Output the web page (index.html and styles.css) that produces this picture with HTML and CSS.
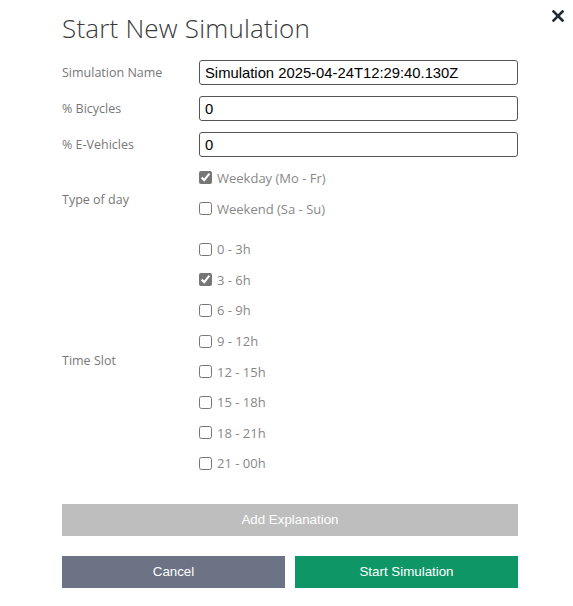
FILE: index.html
```html
<!DOCTYPE html>
<html lang="en">
<head>
  <meta charset="UTF-8">
  <meta name="viewport" content="width=device-width, initial-scale=1.0">
  <title>Start New Simulation</title>
  <link rel="stylesheet" href="styles.css">
</head>
<body>
  <div class="modal">
    <button class="close-btn" aria-label="Close">
      <svg width="12" height="12" viewBox="0 0 12 12"><path d="M1.5 1.5 L10.5 10.5 M10.5 1.5 L1.5 10.5" stroke="#222a33" stroke-width="2.6" stroke-linecap="square"/></svg>
    </button>
    <h1 class="modal__title">Start New Simulation</h1>

    <form class="sim-form">
      <label class="sim-form__label" for="simName">Simulation Name</label>
      <input class="sim-form__input" id="simName" type="text" value="Simulation 2025-04-24T12:29:40.130Z">

      <label class="sim-form__label" for="bicycles">% Bicycles</label>
      <input class="sim-form__input" id="bicycles" type="text" value="0">

      <label class="sim-form__label" for="evehicles">% E-Vehicles</label>
      <input class="sim-form__input" id="evehicles" type="text" value="0">

      <span class="sim-form__label sim-form__label--group">Type of day</span>
      <div class="options options--day">
        <label class="option"><input type="checkbox" checked> Weekday (Mo - Fr)</label>
        <label class="option"><input type="checkbox"> Weekend (Sa - Su)</label>
      </div>

      <span class="sim-form__label sim-form__label--group">Time Slot</span>
      <div class="options options--time">
        <label class="option"><input type="checkbox"> 0 - 3h</label>
        <label class="option"><input type="checkbox" checked> 3 - 6h</label>
        <label class="option"><input type="checkbox"> 6 - 9h</label>
        <label class="option"><input type="checkbox"> 9 - 12h</label>
        <label class="option"><input type="checkbox"> 12 - 15h</label>
        <label class="option"><input type="checkbox"> 15 - 18h</label>
        <label class="option"><input type="checkbox"> 18 - 21h</label>
        <label class="option"><input type="checkbox"> 21 - 00h</label>
      </div>
    </form>

    <button class="btn btn--muted">Add Explanation</button>
    <div class="actions">
      <button class="btn btn--cancel">Cancel</button>
      <button class="btn btn--start">Start Simulation</button>
    </div>
  </div>
</body>
</html>
```

FILE: styles.css
```css
body {
  margin: 0;
  padding: 0;
  background: #fff;
  font-family: "Open Sans", "Noto Sans", sans-serif;
}

.modal {
  position: relative;
  width: 456px;
  padding: 10px 55px 18px 62px;
}

.close-btn {
  position: absolute;
  top: 10px;
  right: 9px;
  border: none;
  background: none;
  padding: 0;
  cursor: pointer;
}

.modal__title {
  margin: 0 0 14px 0;
  font-size: 26px;
  font-weight: 300;
  line-height: 36px;
  color: #3a3a3a;
  letter-spacing: 0.2px;
}

.sim-form {
  display: grid;
  grid-template-columns: 137px 1fr;
  row-gap: 11px;
  align-items: center;
}

.sim-form__label {
  font-size: 12.5px;
  color: #777;
}

.sim-form__label--group {
  padding-top: 7px;
}

.sim-form__input {
  box-sizing: border-box;
  height: 25px;
  width: 100%;
  margin: 0;
  padding: 0 5px;
  border: 1px solid #555;
  border-radius: 3px;
  font-family: "Liberation Sans", Arial, sans-serif;
  font-size: 14.8px;
  color: #000;
}

.options {
  display: flex;
  flex-direction: column;
}

.options--day {
  margin-top: -6px;
}

.options--time {
  margin-top: -1px;
}

.option {
  display: flex;
  align-items: center;
  gap: 5px;
  font-size: 13px;
  color: #888;
  height: 30.6px;
}

.options--day .option {
  height: 31px;
}

.option input {
  margin: 0;
  width: 13px;
  height: 13px;
  accent-color: #767676;
}

.btn {
  border: none;
  font-family: "Liberation Sans", Arial, sans-serif;
  font-size: 13.333px;
  color: #fff;
  height: 32px;
  cursor: pointer;
}

.btn--muted {
  display: block;
  width: 100%;
  margin-top: 25px;
  background-color: #bebebe;
}

.actions {
  display: grid;
  grid-template-columns: 1fr 1fr;
  column-gap: 10px;
  margin-top: 20px;
}

.btn--cancel {
  background-color: #6b7384;
}

.btn--start {
  background-color: #0f9667;
}
```
